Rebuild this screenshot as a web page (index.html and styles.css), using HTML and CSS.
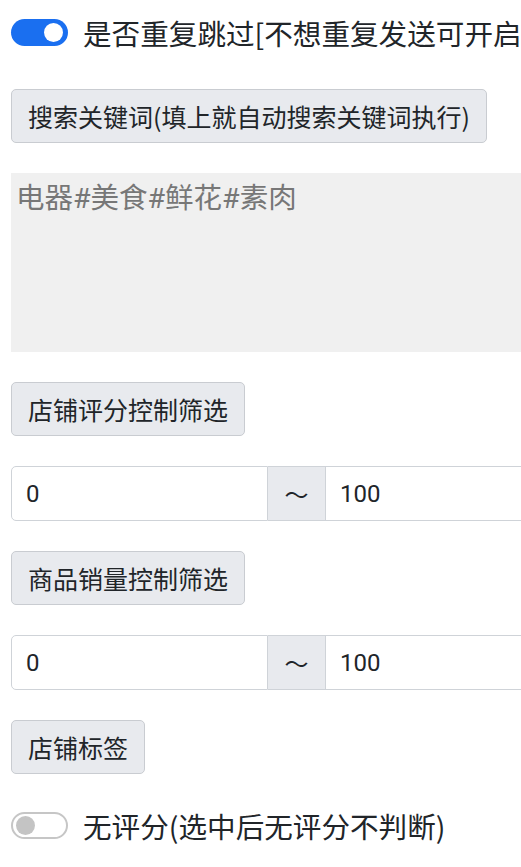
FILE: index.html
```html
<!DOCTYPE html>
<html lang="zh">
<head>
<meta charset="utf-8">
<link rel="stylesheet" href="styles.css">
</head>
<body>
<div class="page">
  <div class="switch-row first">
    <span class="switch on"><span class="knob"></span></span>
    <span class="switch-label">是否重复跳过[不想重复发送可开启</span>
  </div>
  <div class="item"><button class="btn">搜索关键词(填上就自动搜索关键词执行)</button></div>
  <div class="item"><textarea class="area" placeholder="电器#美食#鲜花#素肉"></textarea></div>
  <div class="item"><button class="btn">店铺评分控制筛选</button></div>
  <div class="item group">
    <input class="field left" value="0">
    <span class="addon">～</span>
    <input class="field right" value="100">
  </div>
  <div class="item"><button class="btn">商品销量控制筛选</button></div>
  <div class="item group">
    <input class="field left" value="0">
    <span class="addon">～</span>
    <input class="field right" value="100">
  </div>
  <div class="item"><button class="btn">店铺标签</button></div>
  <div class="switch-row last">
    <span class="switch off"><span class="knob"></span></span>
    <span class="switch-label">无评分(选中后无评分不判断)</span>
  </div>
</div>
</body>
</html>
```
FILE: styles.css
```css
html, body {
  margin: 0;
  padding: 0;
  overflow: hidden;
  background: #fff;
}
body {
  font-family: "Noto Sans CJK SC", "Noto Sans", sans-serif;
  color: #212529;
}
.page {
  width: 572px;
  padding: 11px 0 0 11px;
}
.switch-row {
  display: flex;
  align-items: center;
  height: 42px;
  white-space: nowrap;
}
.switch-row.first {
  margin-bottom: 36px;
}
.switch {
  position: relative;
  flex: none;
  width: 57px;
  height: 27px;
  box-sizing: border-box;
  border-radius: 14px;
  margin-right: 15px;
}
.switch.on {
  background: #1a6ff0;
}
.switch.off {
  background: #fff;
  border: 2px solid #c6c6c6;
}
.knob {
  position: absolute;
  top: 4px;
  width: 19px;
  height: 19px;
  border-radius: 50%;
}
.switch.on .knob {
  right: 5px;
  background: #fff;
}
.switch.off .knob {
  top: 2px;
  left: 3px;
  background: #c4c4c4;
}
.switch-label {
  font-size: 28.6px;
}
.item {
  margin-bottom: 30px;
}
.btn {
  font-family: inherit;
  font-size: 25px;
  line-height: 38px;
  color: #212529;
  background: #e8eaee;
  border: 1px solid #c9ccd1;
  border-radius: 5px;
  padding: 7px 16px;
  margin: 0;
  display: block;
}
.area {
  display: block;
  box-sizing: border-box;
  width: 561px;
  height: 179px;
  margin: 0;
  border: none;
  background: #f0f0f0;
  resize: none;
  font-family: "Roboto", "Noto Sans CJK SC", sans-serif;
  font-size: 28.5px;
  padding: 6px 5px 4px;
  line-height: 40px;
}
.area::placeholder {
  color: #777;
}
.group {
  display: flex;
  height: 55px;
}
.field {
  box-sizing: border-box;
  width: 257px;
  height: 55px;
  margin: 0;
  border: 1px solid #cfd3d8;
  background: #fff;
  font-family: "Roboto", "Noto Sans", sans-serif;
  font-size: 24px;
  color: #212529;
  padding: 0 14px;
}
.field.left {
  border-radius: 5px 0 0 5px;
}
.field.right {
  border-left: none;
  border-radius: 0 5px 5px 0;
}
.addon {
  flex: none;
  box-sizing: border-box;
  width: 58px;
  height: 55px;
  display: flex;
  align-items: center;
  justify-content: center;
  background: #e8eaee;
  border: 1px solid #cfd3d8;
  border-left: none;
  font-size: 24px;
  color: #212529;
}
```
